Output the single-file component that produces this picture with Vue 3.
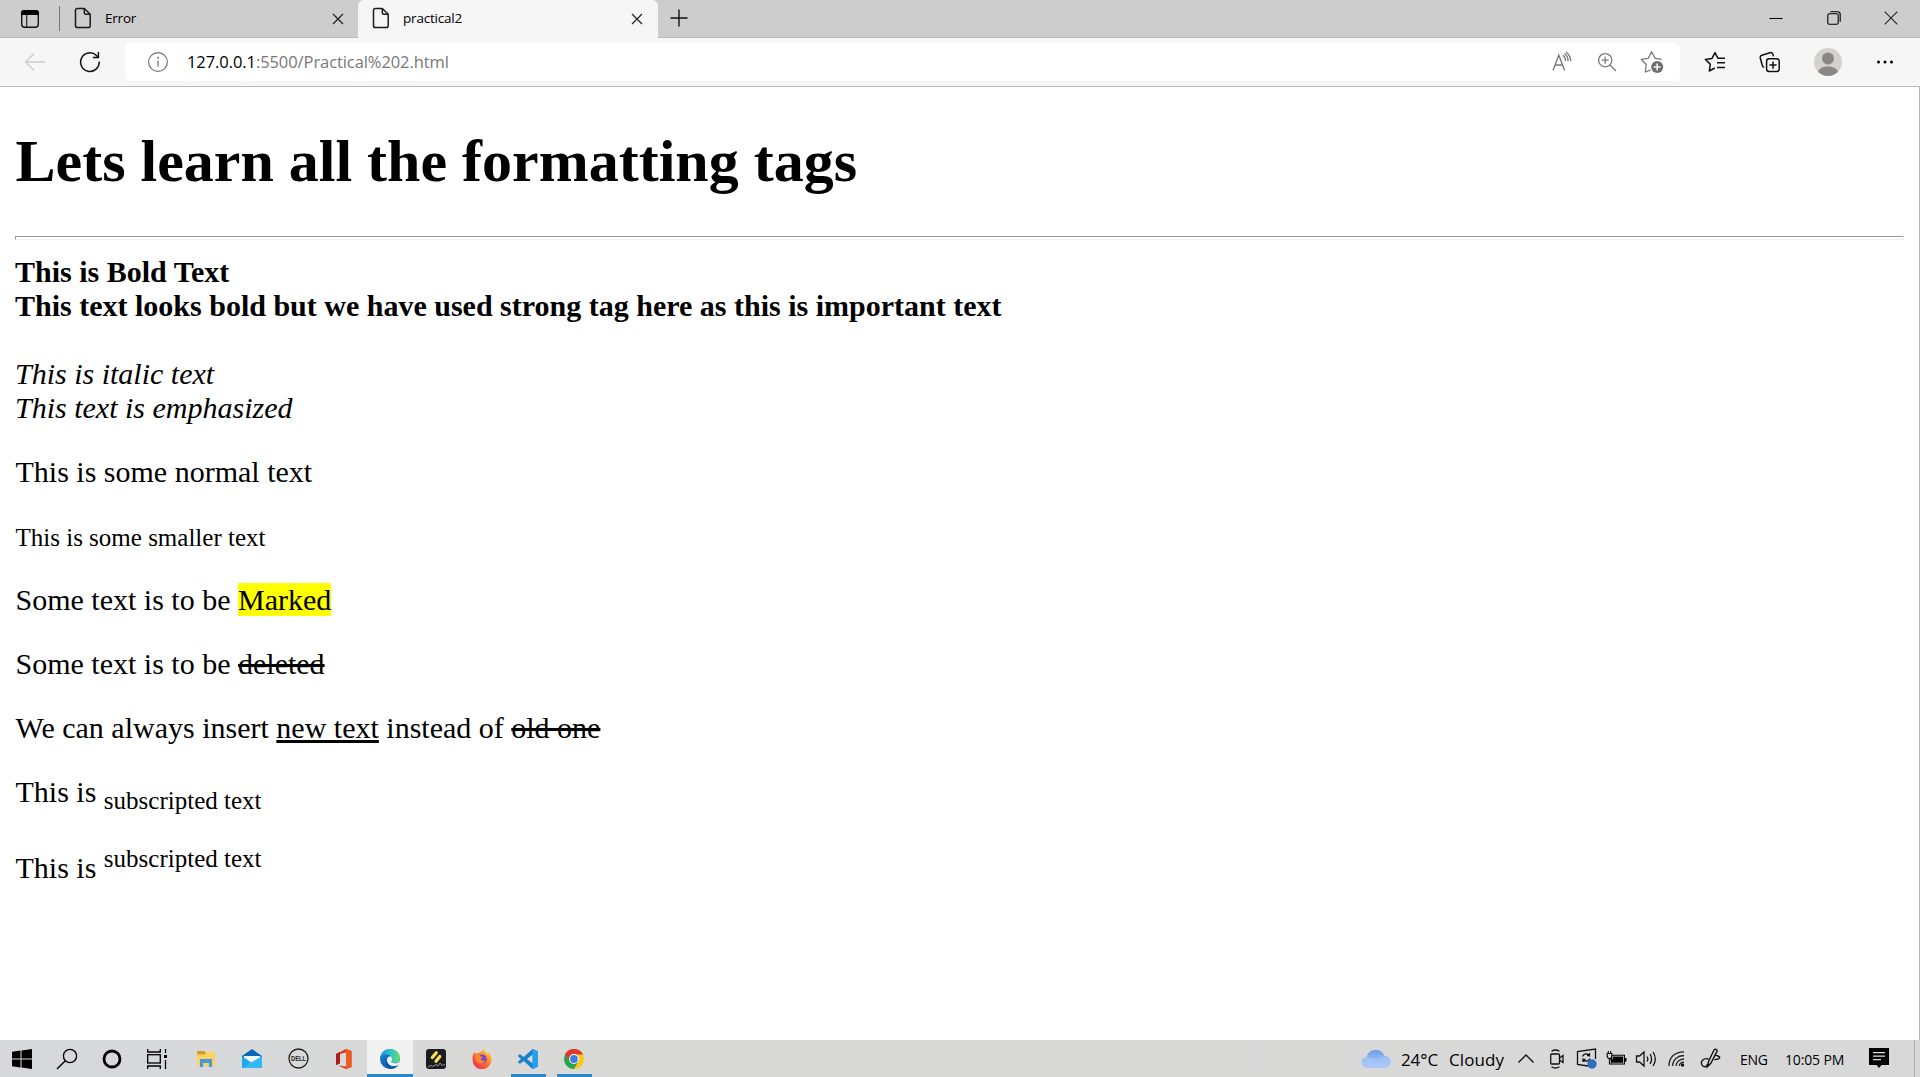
<script setup>
const tabs = [
  { title: 'Error', active: false },
  { title: 'practical2', active: true },
]
</script>

<template>
  <div class="screen">
    <header class="tabstrip">
      <div class="tab-actions">
        <svg width="20" height="20" viewBox="0 0 20 20">
          <rect x="1.7" y="1.7" width="16.6" height="16.6" rx="3" fill="none" stroke="#111" stroke-width="1.4" />
          <path d="M1 6V4a3 3 0 0 1 3-3h12a3 3 0 0 1 3 3v2z" fill="#000" />
          <path d="M6.7 6v12" stroke="#222" stroke-width="1.2" />
        </svg>
      </div>
      <div v-for="t in tabs" :key="t.title" class="tab" :class="{ active: t.active }">
        <svg class="doc" width="18" height="22" viewBox="0 0 18 22" fill="none" stroke="#1a1a1a" stroke-width="1.5" stroke-linejoin="round">
          <path d="M3.3 1.5h7l5.9 5.8v11.4a1.8 1.8 0 0 1-1.8 1.8H3.3a1.8 1.8 0 0 1-1.8-1.8V3.3a1.8 1.8 0 0 1 1.8-1.8z" />
          <path d="M10.3 1.5v4.3a1.5 1.5 0 0 0 1.5 1.500h4.400" />
        </svg>
        <span class="title">{{ t.title }}</span>
        <svg class="close" width="12" height="12" viewBox="0 0 12 12"><path d="M1 1l10 10M11 1L1 11" stroke="#222" stroke-width="1.3" /></svg>
      </div>
      <svg class="plus" width="18" height="18" viewBox="0 0 18 18"><path d="M9 .5v17M.5 9h17" stroke="#111" stroke-width="1.4" /></svg>
      <div class="window-controls">
        <span><svg width="14" height="14" viewBox="0 0 14 14"><path d="M.5 7.500h13" stroke="#000" stroke-width="1.1" /></svg></span>
        <span><svg width="14" height="14" viewBox="0 0 14 14" fill="none" stroke="#000" stroke-width="1.1"><rect x=".8" y="2.8" width="10.4" height="10.4" rx="1.5" /><path d="M3.3.8h7.200a2.700 2.700 0 0 1 2.700 2.700v7.200" /></svg></span>
        <span><svg width="14" height="14" viewBox="0 0 14 14"><path d="M.7.7l12.600 12.600M13.300.7L.7 13.300" stroke="#222" stroke-width="1.1" /></svg></span>
      </div>
    </header>

    <nav class="toolbar">
      <svg class="back" width="22" height="20" viewBox="0 0 22 20" fill="none" stroke="#ccc" stroke-width="1.3"><path d="M21 10H1.500M10 1.500L1.500 10l8.500 8.500" /></svg>
      <svg class="reload" width="22" height="22" viewBox="0 0 22 22" fill="none" stroke="#111" stroke-width="1.5"><path d="M20.200 10.500a9.300 9.300 0 1 1-3-6.200l2 2" /><path d="M19.400 1v5.500h-5.500" /></svg>
      <div class="address">
        <svg class="info" width="22" height="22" viewBox="0 0 22 22"><circle cx="11" cy="11" r="9.4" fill="none" stroke="#757575" stroke-width="1.2" /><path d="M11 9.500v6" stroke="#757575" stroke-width="1.3" /><circle cx="11" cy="6.7" r="1" fill="#757575" /></svg>
        <span class="url"><b>127.0.0.1</b>:5500/Practical%202.html</span>
        <div class="address-tools">
          <span><svg width="22" height="22" viewBox="0 0 22 22" fill="none" stroke="#777" stroke-width="1.3"><path d="M2 19.500L7.800 4.200l5.800 15.300M4 14h7.600M11.800 4.200a7 7 0 0 1 2.800 5.800M13.600 2.600a10 10 0 0 1 3.500 7.400M15 .9a12 12 0 0 1 4.800 9.100" /></svg></span>
          <span><svg width="20" height="20" viewBox="0 0 20 20" fill="none" stroke="#777" stroke-width="1.3"><circle cx="8.2" cy="8.2" r="6.6" /><path d="M13 13l6 6M8.200 4.700v7M4.700 8.200h7" /></svg></span>
          <span><svg width="24" height="24" viewBox="0 0 24 24" fill="none" stroke="#777" stroke-width="1.3" stroke-linejoin="round"><path d="M11 20l-5.600 2 .8-7.500-5-5.200 7.100-1L11.600 1.700l3.500 6.600 6.500 1" /><circle cx="17.2" cy="17" r="6" fill="#6d6d6d" stroke="none" /><path d="M17.200 13.600v6.800M13.800 17h6.800" stroke="#fff" stroke-width="1.5" /></svg></span>
        </div>
      </div>
      <div class="tools">
        <span class="fav"><svg width="22" height="22" viewBox="0 0 22 22" fill="none" stroke="#111" stroke-width="1.5" stroke-linejoin="round"><path d="M10.800 17l-5.500 3 1-6.700-5-4.900 6.700-1L11 1.500l2.800 5.700h7.200M13 11.700h8M13 16.500h8" /></svg></span>
        <span class="coll"><svg width="22" height="22" viewBox="0 0 22 22" fill="none" stroke="#111" stroke-width="1.5"><rect x="7.6" y="7.8" width="12.6" height="12.6" rx="2.5" /><path d="M14 10.500v7.200M10.400 14.100h7.200M5.200 16.200c-1 0-1.600-.7-1.900-1.700L1.300 7c-.3-1.300.4-2.300 1.500-2.700L11 1.700c1.300-.4 2.400.2 2.800 1.400l.7 2.300" /></svg></span>
        <span class="user"><svg width="28" height="28" viewBox="0 0 28 28"><circle cx="14" cy="14" r="14" fill="#d3d1cf" /><circle cx="14" cy="10.5" r="6" fill="#8a8785" /><path d="M4 23.800C6.500 16.700 21.500 16.700 24 23.800A14 14 0 0 1 4 23.800z" fill="#8a8785" /></svg></span>
        <span class="more"><svg width="18" height="6" viewBox="0 0 18 6"><circle cx="2.5" cy="3" r="1.5" /><circle cx="9" cy="3" r="1.5" /><circle cx="15.5" cy="3" r="1.5" /></svg></span>
      </div>
    </nav>

    <main class="page">
      <h1>Lets learn all the formatting tags</h1>
      <hr />
      <b>This is Bold Text</b><br />
      <strong>This text looks bold but we have used strong tag here as this is important text</strong><br /><br />
      <i>This is italic text</i><br />
      <em>This text is emphasized</em>
      <p>This is some normal text</p>
      <p><small>This is some smaller text</small></p>
      <p>Some text is to be <mark>Marked</mark></p>
      <p>Some text is to be <del>deleted</del></p>
      <p>We can always insert <ins>new text</ins> instead of <del>old one</del></p>
      <p>This is <sub>subscripted text</sub></p>
      <p>This is <sup>subscripted text</sup></p>
    </main>

    <footer class="taskbar">
      <div class="system">
        <span><svg width="20" height="20" viewBox="0 0 20 20"><path d="M0 2.800l8.500-1.200v8H0zM9.500 1.400L20 0v9.600H9.500zM0 10.500h8.500v8L0 17.300zM9.500 10.500H20V20L9.500 18.600z" /></svg></span>
        <span><svg width="22" height="22" viewBox="0 0 22 22" fill="none" stroke="#000" stroke-width="1.4"><circle cx="14" cy="8" r="6.6" /><path d="M9.300 12.700L1 21" /></svg></span>
        <span><svg width="20" height="20" viewBox="0 0 20 20"><circle cx="10" cy="10" r="8" fill="none" stroke="#000" stroke-width="2.8" /></svg></span>
        <span><svg width="20" height="20" viewBox="0 0 20 20" fill="none" stroke="#000" stroke-width="1.3"><path d="M.7 0v3h12.600V0M.7 20v-3h12.600v3M18.500 0v4M18.500 11v9" /><rect x=".7" y="5.7" width="12.6" height="8.3" /><path d="M17 6h3v3h-3z" fill="#000" stroke="none" /></svg></span>
      </div>
      <div class="apps">
        <span><svg width="20" height="18" viewBox="0 0 20 18"><path d="M1 1h7l1.800 2H1z" fill="#d99b20" /><path d="M1 2.500h8l2-1h8V15H1z" fill="#fdd262" /><path d="M1 1h7l2 2-1.500 1.500H1z" fill="#d99b20" /><path d="M1 5h18v11H1z" fill="#fbd067" /><path d="M4 17V9h12v8h-3v-4H7v4z" fill="#429ad6" /></svg></span>
        <span><svg width="20" height="20" viewBox="0 0 20 20"><path d="M0 7L10 0l10 7v3H0z" fill="#0966b8" /><path d="M2 7h16v6H2z" fill="#fff" /><path d="M0 7l10 7L20 7v12H0z" fill="#20a7ed" /><path d="M20 7L0 19h20z" fill="#35b9f5" /><path d="M3 7h14l-7 5z" fill="#eef8ff" /></svg></span>
        <span><svg width="21" height="21" viewBox="0 0 21 21"><circle cx="10.5" cy="10.5" r="9.5" fill="none" stroke="#222" stroke-width="1.3" /><text x="10.5" y="13" text-anchor="middle" textLength="15" lengthAdjust="spacingAndGlyphs" class="dell">DELL</text></svg></span>
        <span><svg width="18" height="20" viewBox="0 0 18 20"><path d="M1 5L11 0l5.500 2v16L11 20l-8-3.500 8 1V3.500L5 5v9.500L1 16z" fill="#d83b16" /><path d="M11 0l5.500 2v16L11 20z" fill="#ef5a20" /><path d="M1 5l4-2v11L1 16z" fill="#a91d1d" /></svg></span>
        <span class="current"><svg width="20" height="20" viewBox="0 0 20 20">
          <defs>
            <linearGradient id="edgeTop" x1="0" x2="1"><stop offset="0" stop-color="#1c8fd8" /><stop offset=".5" stop-color="#2fc1cf" /><stop offset="1" stop-color="#66dd68" /></linearGradient>
            <linearGradient id="edgeLow" x1="0" y1="0" x2="1" y2="1"><stop offset="0" stop-color="#1a86d6" /><stop offset="1" stop-color="#0c4b93" /></linearGradient>
          </defs>
          <circle cx="10" cy="10" r="10" fill="url(#edgeLow)" />
          <path d="M0 9.500C.5 4 4.500 0 10 0c6 0 10 4.300 10 9 0 3.500-2.600 5.300-5.300 5.300-2.200 0-3.600-.8-3.600-1.500 0-.6 1-1 1-2.900C12.100 7.500 9.500 5.500 6.300 5.500 3 5.500.8 7.500 0 9.500z" fill="url(#edgeTop)" />
          <path d="M7 10c-.8 4.500 3 7.500 7.300 7.300 2-.1 3.400-.8 4.400-1.600.8-1.200 1.300-2.600 1.300-4.200-.9 2-3 2.800-5.300 2.800-2.200 0-3.600-.8-3.600-1.500 0-.6 1-1 1-2.900 0-1-.5-2-1.400-2.700C8.700 7.300 7.300 8.300 7 10z" fill="#eaf5fb" />
          <path d="M7 10c-.8 4.500 3 7.500 7.300 7.300 2-.1 3.400-.8 4.400-1.600C17 18.500 14 20 10.500 20 6.500 19.500 4 13 7 10z" fill="#1356a0" />
        </svg></span>
        <span><svg width="20" height="20" viewBox="0 0 20 20"><rect width="20" height="20" rx="3" fill="#1b1c20" /><path d="M6.300 8.500L10.300 3.800M10 12.300L13.800 7.500" stroke="#ffe24a" stroke-width="3.2" stroke-linecap="round" /><path d="M2 18l3-1.500 2 1 3-2 2 1.500 2-3 2 2.500 3-1" fill="none" stroke="#999" /></svg></span>
        <span><svg width="20" height="20" viewBox="0 0 20 20">
          <defs><linearGradient id="fox" x1="1" y1="0" x2=".2" y2="1"><stop offset="0" stop-color="#ffe640" /><stop offset=".45" stop-color="#ff8a24" /><stop offset="1" stop-color="#f0245c" /></linearGradient></defs>
          <path d="M2.500 3l1.700 2C5 4 6.500 3.600 7.500 3.800L10 2l1.500-2c1 2.500 3 3.500 4 5l1-1.800c2 2 3 4.600 3 7.300A9.500 9.500 0 0 1 .5 11C.3 8 .8 5.500 2.500 3z" fill="url(#fox)" />
          <circle cx="10.3" cy="10" r="4.5" fill="#7d43d8" />
          <path d="M4 6.500c2-.8 4 0 4.500 1l2.500.2c-.3 1.300-1.600 1.500-2.400 2 .2 2 3 2.600 4.800 1.300-1 4-6.400 4.500-8.600 1.500C3.700 10.500 3.500 8.500 4 6.500z" fill="#ff8a2a" />
        </svg></span>
        <span class="open"><svg width="20" height="20" viewBox="0 0 20 20"><path d="M14.500 0L20 2.300v15.400L14.500 20 5.700 12 2 14.800.2 13.700V12.600L3 10 .2 7.400V6.300L2 5.200 5.700 8zM14.700 5.500L9 10l5.700 4.500z" fill="#1783ca" fill-rule="evenodd" /><path d="M14.500 0L20 2.300v15.400L14.500 20z" fill="#27a0ec" /></svg></span>
        <span class="open"><svg width="20" height="20" viewBox="0 0 20 20"><path d="M10 10L1.340 5A10 10 0 0 1 18.660 5z" fill="#e2382b" /><path d="M10 10L1.340 5A10 10 0 0 0 10 20z" fill="#2ba24c" /><path d="M10 10l8.660-5A10 10 0 0 1 10 20z" fill="#fcc918" /><path d="M5.700 12.500L1.340 5l8.660 1zM14.300 12.500L10 20l-1-5.500z" fill="#2ba24c" /><path d="M10 5h8.660L14 12z" fill="#fcc918" /><path d="M1.340 5L5.500 12 10 5.400h8.800A10 10 0 0 0 1.340 5z" fill="#e2382b" /><circle cx="10" cy="10" r="4.9" fill="#fff" /><circle cx="10" cy="10" r="3.9" fill="#3b7de9" /></svg></span>
      </div>
      <div class="tray">
        <svg class="cloud" width="30" height="20" viewBox="0 0 30 20">
          <defs><linearGradient id="sky" x1="0" y1="0" x2="0" y2="1"><stop offset="0" stop-color="#6d9ce8" /><stop offset="1" stop-color="#bdd6fb" /></linearGradient></defs>
          <path d="M6 19a5.500 5.500 0 0 1-.5-10.900A9.500 9.500 0 0 1 23.500 7 6 6 0 0 1 24 19z" fill="url(#sky)" />
          <path d="M6 19a5.500 5.500 0 1 1 4-9.300c3-1 6 1 6.500 3.300A7 7 0 0 1 24 7.200 6 6 0 0 1 24 19z" fill="#a4c4f7" opacity=".75" />
        </svg>
        <span class="temp">24°C</span>
        <span class="sky">Cloudy</span>
        <svg class="chev" width="18" height="20" viewBox="0 0 18 20" fill="none" stroke="#111" stroke-width="1.4"><path d="M1.500 13.500L9 6l7.500 7.500" /></svg>
        <svg class="meet" width="16" height="20" viewBox="0 0 16 20" fill="none" stroke="#111" stroke-width="1.3"><rect x="1.7" y="5" width="8.8" height="10" rx="1" /><path d="M10.500 9l3.500-2.500v7L10.500 11M2.500 2.300c2.500-1.600 5.500-1.600 8 0M2.500 17.700c2.500 1.600 5.500 1.600 8 0" /></svg>
        <svg class="sync" width="21" height="21" viewBox="0 0 21 21" fill="none" stroke="#111" stroke-width="1.3"><path d="M12 18L1.500 16.500V3.500L19.500 1v10M6.500 8.500c1-3 5-3.500 7-1V5M13.500 7.500H11M14 10.500c-1 3-5 3.500-7 1V14M7 11.500h2.500" /><circle cx="16" cy="16" r="4.7" fill="#2f70b8" stroke="none" /></svg>
        <svg class="battery" width="21" height="20" viewBox="0 0 21 20"><path d="M5.500 6.200h13V15h-13z" fill="none" stroke="#000" stroke-width="1.1" /><path d="M6.800 7.500h10.400v6.200H4.500V10h2.300zM19 9h1.500v3.500H19z" fill="#000" /><path d="M1.200 4.500h4.600v2.700a2.300 2.300 0 0 1-4.600 0zM2.300 2v2.500M4.700 2v2.500M3.500 9.500V15h2" fill="#d8d8d8" stroke="#111" stroke-width="1.2" /></svg>
        <svg class="speaker" width="22" height="20" viewBox="0 0 22 20" fill="none" stroke="#111" stroke-width="1.3"><path d="M1.500 7h3L9 3v14l-4.500-4h-3zM12 7.500c1 1.500 1 3.500 0 5M15 5.200c2 3 2 6.600 0 9.600M18 3c3 4.500 3 9.500 0 14" /></svg>
        <svg class="wifi" width="18" height="18" viewBox="0 0 18 18" fill="none" stroke="#222" stroke-width="1.3"><path d="M1 16C1 7 7 2 16 1.800M4.500 16C5 9.500 9.500 5.700 16 5.500M8 16c.3-4 3.500-6.800 8-7M11.300 16c.2-2.200 2-3.700 4.700-3.800" /><circle cx="14.5" cy="15" r="1.7" fill="#111" stroke="none" /></svg>
        <svg class="pen" width="22" height="21" viewBox="0 0 22 21" fill="none" stroke="#111" stroke-width="1.4"><path d="M7.500 18.500l1-5L14 2c1-1.600 3.500-.5 3 1.400L11 15zM14.500 7c4 .5 7 2.500 4 3.800-1.800.8-3 .4-4 1.200M8.500 11C4 9.500 0 13 2 17c1.300 2.500 5 2.500 5.500-1" /></svg>
        <span class="lang">ENG</span>
        <span class="clock">10:05 PM</span>
        <svg class="notes" width="20" height="21" viewBox="0 0 20 21"><path d="M0 0h20v17h-7.500L10 20l-2.500-3H0z" /><path d="M4 4.700h12M4 8.200h12M4 11.700h8" stroke="#ddd" stroke-width="1.2" /></svg>
      </div>
    </footer>
  </div>
</template>

<style>
body { margin: 0; }
</style>

<style scoped>
.screen {
  width: 1920px;
  height: 1077px;
  display: flex;
  flex-direction: column;
  overflow: hidden;
  background: #fff;
  color: #000;
  font-family: "Open Sans", "Noto Sans", sans-serif;
}
svg { display: block; flex: none; }

.tabstrip {
  height: 38px;
  flex: none;
  display: flex;
  background: #cdcdcd;
  box-shadow: inset 0 -1px #bababa;
}
.tab-actions {
  width: 60px;
  height: 25px;
  margin-top: 6px;
  display: flex;
  align-items: center;
  padding-left: 20px;
  box-sizing: border-box;
  border-right: 1px solid #777;
}
.tab {
  width: 298px;
  height: 38px;
  box-sizing: border-box;
  display: flex;
  align-items: center;
  padding: 0 14px;
  font-size: 13.5px;
  letter-spacing: -0.2px;
}
.tab.active {
  width: 300px;
  padding-right: 15px;
  background: #f6f6f6;
  border-radius: 6px 6px 0 0;
}
.doc { margin-top: -2px; }
.title { flex: 1; margin-left: 13px; margin-top: -3px; }
.plus { margin: 9px 0 0 12px; }
.window-controls { margin-left: auto; display: flex; height: 35px; }
.window-controls span { width: 57.6px; display: grid; place-items: center; }

.toolbar {
  height: 49px;
  flex: none;
  box-sizing: border-box;
  display: flex;
  align-items: center;
  background: #f6f6f6;
  border-bottom: 1px solid #b9b9b9;
}
.back { margin-left: 24px; }
.reload { margin-left: 33px; }
.address {
  width: 1555px;
  height: 38px;
  margin-left: 24px;
  display: flex;
  align-items: center;
  background: #fff;
  border-radius: 5px;
}
.info { margin-left: 22px; }
.url { margin-left: 18px; margin-top: -2px; font-size: 16.5px; letter-spacing: -0.08px; color: #777; white-space: nowrap; }
.url b { font-weight: 400; color: #000; }
.address-tools { margin-left: auto; margin-right: 6px; display: flex; }
.address-tools span { width: 45px; display: grid; place-items: center; }
.tools { display: flex; align-items: center; margin-left: 7px; }
.tools span { display: grid; place-items: center; }
.fav { width: 56px; }
.coll { width: 54px; }
.user { width: 62px; }
.more { width: 52px; }

.page {
  flex: 1;
  min-height: 0;
  overflow: hidden;
  padding: 0 15px;
  border-right: 1px solid #b5b5b5;
  font-family: "Liberation Serif", "Times New Roman", serif;
  font-size: 30px;
  line-height: 34px;
  text-indent: 0.5px;
}
h1 { margin: 40px 0; font-size: 60px; line-height: 69px; font-weight: 700; }
hr { margin: 0 0 15px; height: 4px; box-sizing: border-box; border: 1px solid; border-color: #999 #eee #eee #999; }
p { margin: 30px 0; }
small, sub, sup { font-size: 25px; line-height: normal; }
mark { background: #ff0; color: #000; }
del, ins { text-decoration-thickness: 3px; }

.taskbar {
  height: 37px;
  flex: none;
  display: flex;
  background: linear-gradient(90deg, #d6d8db, #d9d9d8 25%, #d8d8d8);
}
.system, .apps { display: flex; }
.system span { width: 45px; display: grid; place-items: center; }
.system svg { margin-right: 1px; }
.apps { margin-left: 3px; }
.apps span { width: 46px; display: grid; place-items: center; }
.current { background: #f1f1f1; box-shadow: inset 0 -3px #2b88c8; }
.open { background: linear-gradient(#2b88c8, #2b88c8) 50% 100% / 35px 3px no-repeat; }
.dell { font: 700 6.5px "Liberation Sans", sans-serif; fill: #222; }
.tray {
  flex: 1;
  display: flex;
  align-items: center;
  margin-right: 5px;
  border-right: 1px solid #aaa;
  white-space: nowrap;
}
.cloud { margin-left: auto; }
.temp { width: 48px; margin: 2px 0 0 10px; font-size: 17px; letter-spacing: -0.1px; }
.sky { width: 58px; margin-top: 2px; font-size: 17px; letter-spacing: 0.1px; }
.chev { margin-left: 10px; }
.meet { margin-left: 14px; }
.sync { margin-left: 11px; }
.battery { margin-left: 9px; }
.speaker { margin-left: 8px; }
.wifi { margin-left: 11px; }
.pen { margin-left: 14px; }
.lang { width: 46px; margin: 1px 0 0 18px; font-size: 14px; letter-spacing: -0.3px; }
.clock { width: 60px; margin: 1px 0 0 -1px; font-size: 14px; letter-spacing: -0.15px; }
.notes { margin-left: 24px; margin-right: 25px; }
</style>
